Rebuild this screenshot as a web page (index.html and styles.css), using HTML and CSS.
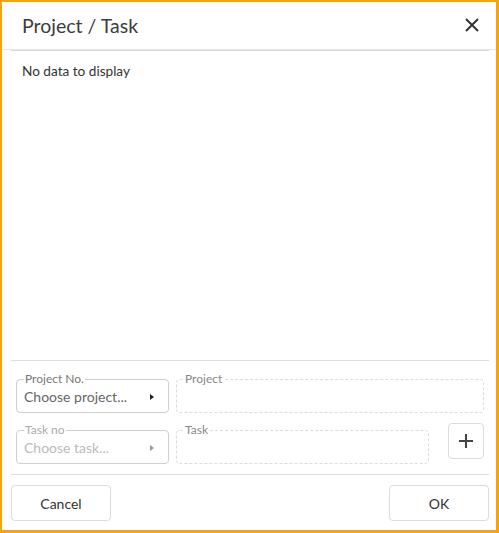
FILE: index.html
```html
<!DOCTYPE html>
<html>
<head>
<meta charset="utf-8">
<link rel="stylesheet" href="styles.css">
</head>
<body>
<div class="dialog">
  <div class="header">
    <h1 class="title">Project / Task</h1>
    <button class="close" aria-label="Close">
      <svg width="14" height="14" viewBox="0 0 14 14"><path d="M1 1L13 13M13 1L1 13" stroke="#333" stroke-width="2" fill="none"/></svg>
    </button>
  </div>
  <div class="header-line"></div>
  <div class="grid-area">
    <div class="empty">No data to display</div>
  </div>
  <div class="divider"></div>
  <div class="form">
    <fieldset class="field select">
      <legend>Project No.</legend>
      <div class="value"><span>Choose project...</span><span class="arrow"></span></div>
    </fieldset>
    <fieldset class="field readonly wide">
      <legend>Project</legend>
      <div class="value"></div>
    </fieldset>
    <fieldset class="field select disabled">
      <legend>Task no</legend>
      <div class="value"><span>Choose task...</span><span class="arrow"></span></div>
    </fieldset>
    <fieldset class="field readonly narrow">
      <legend>Task</legend>
      <div class="value"></div>
    </fieldset>
    <button class="add" aria-label="Add">
      <svg width="16" height="16" viewBox="0 0 16 16"><path d="M8 1V15M1 8H15" stroke="#444" stroke-width="2" fill="none"/></svg>
    </button>
  </div>
  <div class="divider"></div>
  <div class="footer">
    <button class="btn">Cancel</button>
    <button class="btn">OK</button>
  </div>
</div>
</body>
</html>
```

FILE: styles.css
```css
* { box-sizing: border-box; }
html, body { margin: 0; padding: 0; background: #fff; }
body { font-family: Lato, "Open Sans", sans-serif; color: #333; }

.dialog {
  width: 499px;
  height: 533px;
  border-style: solid;
  border-color: #f5a40c;
  border-width: 2px 3px 3px 2px;
  display: flex;
  flex-direction: column;
  background: #fff;
}

.header {
  height: 48px;
  border-bottom: 1px solid #e6e6e6;
  display: flex;
  align-items: center;
  justify-content: space-between;
  padding: 0 17px 0 20px;
  flex: none;
}
.title {
  margin: 0;
  font-size: 19.5px;
  font-weight: 400;
  color: #3c3c3c;
  line-height: 24px;
  padding-top: 1px;
}
.close {
  border: 0;
  background: none;
  padding: 0;
  width: 14px;
  height: 14px;
  display: flex;
  margin-bottom: 1px;
}
.header-line {
  height: 1px;
  background: #d9d9d9;
  margin: 0 7px 0 9px;
  flex: none;
}

.grid-area {
  flex: 1;
  padding: 12px 20px;
}
.empty {
  font-size: 13.6px;
  line-height: 17px;
}

.divider {
  height: 1px;
  background: #dedede;
  margin: 0 7px 0 9px;
  flex: none;
}

.form {
  display: grid;
  grid-template-columns: 153px 1fr 36px;
  column-gap: 7px;
  row-gap: 11px;
  padding: 12px 12px 10px 14px;
  flex: none;
}

.field {
  margin: 0;
  min-width: 0;
  padding: 0 7px 4px 7px;
  border: 1px solid #cfcfcf;
  border-radius: 4px;
}
.field legend {
  font-size: 12px;
  line-height: 12px;
  padding: 0 1px;
  color: #777;
}
.field .value {
  height: 23px;
  display: flex;
  align-items: center;
  justify-content: space-between;
  font-size: 14px;
  color: #666;
}
.arrow {
  width: 0;
  height: 0;
  border-top: 3px solid transparent;
  border-bottom: 3px solid transparent;
  border-left: 4px solid #222;
  margin-right: 7px;
}
.readonly {
  border: 1px dashed #dcdcdc;
}
.readonly legend { color: #888; }
.wide { grid-column: 2 / 4; }
.narrow { margin-right: 12px; }
.disabled legend { color: #aaa; }
.disabled .value { color: #bbb; }
.disabled .arrow { border-left-color: #999; }

.add {
  width: 36px;
  height: 36px;
  margin-top: -1px;
  border: 1px solid #dcdcdc;
  border-radius: 4px;
  background: #fff;
  padding: 0;
  display: flex;
  align-items: center;
  justify-content: center;
}

.footer {
  display: flex;
  justify-content: space-between;
  padding: 10px 7px 9px 9px;
  flex: none;
}
.btn {
  width: 100px;
  height: 36px;
  border: 1px solid #dcdcdc;
  border-radius: 4px;
  background: #fff;
  font-family: Lato, "Open Sans", sans-serif;
  font-size: 14px;
  color: #333;
}
```
